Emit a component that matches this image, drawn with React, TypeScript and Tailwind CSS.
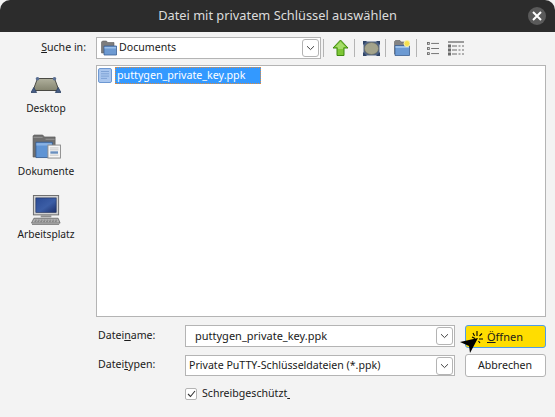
const font = { fontFamily: '"Noto Sans", sans-serif' };

function Chevron() {
  return (
    <span className="w-[17px] h-[18px] shrink-0 bg-white border border-[#b4b4b4] rounded-[3px] flex items-center justify-center">
      <svg width="9" height="6" viewBox="0 0 9 6" fill="none" stroke="#444" strokeWidth="1">
        <path d="M1 1.2 L4.5 4.6 L8 1.2" />
      </svg>
    </span>
  );
}

function Sep() {
  return <span className="block w-px h-[18px] bg-[#b4b4b4] shrink-0" />;
}

function FolderIcon() {
  return (
    <svg width="16" height="16" viewBox="0 0 16 16" className="shrink-0">
      <path d="M0.5 13 V2 L1.5 1 H5.5 L6.5 2.5 H13 V13 Z" fill="#7d7d7d" stroke="#5f5f5f" strokeWidth="0.6" />
      <path d="M3 6 H15.5 V15 H3 Z" fill="#6d9ad2" stroke="#3c5f92" strokeWidth="0.8" />
      <path d="M3.5 7 H15 V8.5 H3.5 Z" fill="#9cc0e8" />
    </svg>
  );
}

function UpIcon() {
  return (
    <svg width="17" height="18" viewBox="0 0 17 18">
      <path d="M8.5 1 L16 9 H12 V16.5 H5 V9 H1 Z" fill="#7ec636" stroke="#3f8a10" strokeWidth="1" strokeLinejoin="round" />
      <path d="M8.5 2.8 L13.5 8 H11 V10 H6 V8 H3.5 Z" fill="#a5dc6a" />
    </svg>
  );
}

function DesktopSmall() {
  return (
    <svg width="17" height="15" viewBox="0 0 17 15">
      <rect x="0.5" y="0.5" width="16" height="14" fill="#4f6384" />
      <ellipse cx="8.5" cy="7.5" rx="7" ry="6" fill="#a3a38b" stroke="#6e6e5c" strokeWidth="0.6" />
      <path d="M0 0 H4 L0 4 Z M17 0 H13 L17 4 Z M0 15 H4 L0 11 Z M17 15 H13 L17 11 Z" fill="#2f4466" />
    </svg>
  );
}

function NewFolder() {
  return (
    <svg width="16" height="16" viewBox="0 0 16 16">
      <path d="M0.5 14 V1.5 L1.5 0.5 H6 L7 2 H13 V14 Z" fill="#838383" stroke="#5f5f5f" strokeWidth="0.6" />
      <path d="M1 5.5 H15.5 V15.5 H1 Z" fill="#6c9ad3" stroke="#3c5f92" strokeWidth="0.8" />
      <path d="M1.5 6 H15 V8 H1.5 Z" fill="#9cc0e8" />
      <circle cx="13" cy="3.5" r="3" fill="#f4e04f" stroke="#f9f3b0" strokeWidth="1" />
    </svg>
  );
}

function ListIcon() {
  return (
    <svg width="12" height="15" viewBox="0 0 13 15" fill="none" stroke="#6b6b6b">
      <rect x="0.5" y="1" width="2" height="2" />
      <rect x="0.5" y="6.5" width="2" height="2" />
      <rect x="0.5" y="12" width="2" height="2" />
      <path d="M4.5 2 H13 M4.5 7.5 H13 M4.5 13 H13" strokeWidth="1" />
    </svg>
  );
}

function DetailIcon() {
  return (
    <svg width="16" height="15" viewBox="0 0 16 15" fill="none" stroke="#6b6b6b">
      <rect x="0" y="0" width="16" height="2" fill="#9a9a9a" stroke="none" />
      <rect x="0.5" y="4" width="2" height="2" />
      <rect x="0.5" y="8" width="2" height="2" />
      <rect x="0.5" y="12" width="2" height="2" />
      <path d="M4 5 H9 M10.5 5 H12.5 M14 5 H16 M4 9 H9 M10.5 9 H12.5 M14 9 H16 M4 13 H9 M10.5 13 H12.5 M14 13 H16" />
    </svg>
  );
}

function DocIcon() {
  return (
    <svg width="14" height="15" viewBox="0 0 14 15" className="shrink-0">
      <rect x="0.5" y="0.5" width="13" height="14" rx="1.5" fill="#a9c6ee" stroke="#6d98d2" />
      <path d="M3 3.5 H11 M3 5.8 H11 M3 8.1 H11 M3 10.4 H9" stroke="#7fa3d6" strokeWidth="1" />
    </svg>
  );
}

function DesktopBig() {
  return (
    <svg width="30" height="17" viewBox="0 0 30 17">
      <defs>
        <linearGradient id="dk" x1="0" y1="0" x2="0" y2="1">
          <stop offset="0" stopColor="#b0b09d" />
          <stop offset="1" stopColor="#84846f" />
        </linearGradient>
      </defs>
      <path d="M6.5 1.5 H23.5 L28 13.5 H2 Z" fill="url(#dk)" stroke="#4a4a44" strokeWidth="1" strokeLinejoin="round" />
      <circle cx="6.5" cy="1.8" r="1.8" fill="#5a6f93" />
      <circle cx="23.5" cy="1.8" r="1.8" fill="#5a6f93" />
      <path d="M0 15.5 L2.8 10.5 L5.6 15.5 Z M24.4 15.5 L27.2 10.5 L30 15.5 Z" fill="#475d84" stroke="#2f4466" strokeWidth="0.8" strokeLinejoin="round" />
    </svg>
  );
}

function DocsBig() {
  return (
    <svg width="29" height="25" viewBox="0 0 30 26">
      <path d="M1 24 V2 L2 1 H11 L13 3 H24 V24 Z" fill="#6f6f6f" stroke="#555" strokeWidth="0.6" />
      <path d="M1.5 3.5 H11 M14 5.5 H23.5" stroke="#969696" />
      <path d="M4 8.5 H21 V24.5 H4 Z" fill="#5f94d4" stroke="#31598f" strokeWidth="0.8" />
      <path d="M4.5 9.5 H20.5 V12 H4.5 Z" fill="#88b2e4" />
      <rect x="16.5" y="11.5" width="13" height="13.5" fill="#f7f7f7" stroke="#8c8c8c" />
      <path d="M18.5 14.5 H27.5 M18.5 16.5 H27.5 M18.5 22 H27.5" stroke="#c2c2c2" />
      <rect x="19" y="18" width="8" height="2.5" fill="#6a8fbe" />
    </svg>
  );
}

function ComputerBig() {
  return (
    <svg width="31" height="31" viewBox="0 0 32 32">
      <defs>
        <linearGradient id="sc" x1="0" y1="0" x2="1" y2="1">
          <stop offset="0" stopColor="#2a4a94" />
          <stop offset="0.55" stopColor="#3c5ea6" />
          <stop offset="1" stopColor="#1c2f6a" />
        </linearGradient>
      </defs>
      <rect x="2.5" y="0.5" width="26" height="20" fill="#d2d2d2" stroke="#6c6c6c" />
      <rect x="5" y="3" width="21" height="15" fill="url(#sc)" stroke="#1a2a55" strokeWidth="0.6" />
      <rect x="10" y="21" width="11" height="2" fill="#8e8e8e" />
      <path d="M3 24 H28 L30 29 H0.5 Z" fill="#b4b4b4" stroke="#5f5f5f" strokeWidth="0.8" />
      <path d="M4 26 H27 M3.5 27.5 H27.5" stroke="#7d7d7d" strokeDasharray="2 1" />
      <path d="M1 29.5 H29 V31 H1 Z" fill="#8a8a8a" />
    </svg>
  );
}

function SideItem({ icon, label, h, pb }: { icon: React.ReactNode; label: string; h: string; pb: string }) {
  return (
    <div className={"flex flex-col items-center justify-end " + h}>
      <div className={"flex items-end justify-center " + pb}>{icon}</div>
      <span className="text-[10.2px] leading-[15px] text-[#1a1a1a]">{label}</span>
    </div>
  );
}

function Combo({ children, h }: { children: React.ReactNode; h: string }) {
  return (
    <div className={"flex items-center justify-between bg-white border border-[#b4b4b4] pr-px text-[#1a1a1a] " + h}>
      {children}
      <Chevron />
    </div>
  );
}

export default function App() {
  return (
    <div className="relative w-[555px] h-[417px] bg-[#f3f3f3] flex flex-col overflow-hidden" style={font}>
      <div className="h-8 shrink-0 bg-[#2c2c2c] rounded-t-[10px] flex items-center relative text-[12.8px] text-[#dcdcdc] justify-center">
        Datei mit privatem Schlüssel auswählen
        <span className="absolute right-[9px] top-[7px] w-[18px] h-[18px] rounded-full bg-[#5a5a5a] flex items-center justify-center">
          <svg width="10" height="10" viewBox="0 0 10 10" stroke="#fff" strokeWidth="2">
            <path d="M1 1 L9 9 M9 1 L1 9" />
          </svg>
        </span>
      </div>

      <div className="flex-1 flex text-[10.6px]">
        <div className="w-[96px] shrink-0 flex flex-col">
          <div className="h-[22px] mt-[5px] flex items-center justify-end pr-[10px] text-[#1a1a1a]">
            <span><span className="underline">S</span>uche in:</span>
          </div>
          <div className="flex flex-col mt-[6px] pr-[4px]">
            <SideItem h="h-[51px]" pb="pb-[7px]" icon={<DesktopBig />} label="Desktop" />
            <SideItem h="h-[63px]" pb="pb-[5px]" icon={<DocsBig />} label="Dokumente" />
            <SideItem h="h-[63px]" pb="pb-[1px]" icon={<ComputerBig />} label="Arbeitsplatz" />
          </div>
        </div>

        <div className="flex-1 flex flex-col pr-[9px]">
          <div className="h-[22px] mt-[5px] flex items-center">
            <div className="w-[225px] shrink-0">
              <Combo h="h-[22px]">
                <span className="flex items-center gap-[2px] pl-[4px]"><FolderIcon />Documents</span>
              </Combo>
            </div>
            <span className="ml-[2px]"><Sep /></span>
            <span className="ml-[8px] w-[17px] flex"><UpIcon /></span>
            <span className="ml-[5px]"><Sep /></span>
            <span className="ml-[8px] w-[17px] flex"><DesktopSmall /></span>
            <span className="ml-[5px]"><Sep /></span>
            <span className="ml-[8px] w-[16px] flex"><NewFolder /></span>
            <span className="ml-[6px]"><Sep /></span>
            <span className="ml-[10px] flex"><ListIcon /></span>
            <span className="ml-[9px] flex"><DetailIcon /></span>
          </div>

          <div className="mt-[6px] h-[252px] bg-white border border-[#b4b4b4] pl-[1px] pt-[1px]">
            <div className="flex items-center gap-[3px]">
              <DocIcon />
              <span className="w-[146px] h-[17px] bg-[#3399ff] outline-1 outline-dotted outline-[#e08a3c] -outline-offset-1 pl-[2px] text-[10.7px] leading-[17px] text-white">
                puttygen_private_key.ppk
              </span>
            </div>
          </div>

          <div className="mt-[8px] grid grid-cols-[79px_270px_81px] gap-x-[10px] text-[#1a1a1a] items-start">
            <div className="h-[22px] flex items-center pl-[2px]">
              <span>Datei<span className="underline">n</span>ame:</span>
            </div>
            <Combo h="h-[22px]"><span className="pl-[9px] text-[11px]">puttygen_private_key.ppk</span></Combo>
            <div className="h-[23px] rounded-[3px] bg-[#ffdd00] border border-[#4f9ce8] flex items-center pl-[21px] pt-[1px]">
              <span className="text-[11px]"><span className="underline">Ö</span>ffnen</span>
            </div>
            <div className="mt-[6px] h-[20px] flex items-center pl-[2px] pt-[1px]">
              <span>Datei<span className="underline">t</span>ypen:</span>
            </div>
            <div className="mt-[7px]">
              <Combo h="h-[21px]"><span className="pl-[3px] pt-[1px]">Private PuTTY-Schlüsseldateien (*.ppk)</span></Combo>
            </div>
            <div className="mt-[6px] h-[23px] rounded-[3px] bg-white border border-[#b4b4b4] flex items-center justify-center pt-[1px] pr-[1px]">
              Abbrechen
            </div>
            <div />
            <label className="mt-[9px] col-span-2 flex items-center gap-[5px] h-[16px]">
              <span className="w-[12px] h-[12px] bg-white border border-[#b4b4b4] rounded-[2px] flex items-center justify-center">
                <svg width="9" height="8" viewBox="0 0 9 8" fill="none" stroke="#333" strokeWidth="1.1">
                  <path d="M1 4 L3.5 6.5 L8 1" />
                </svg>
              </span>
              <span>Schreibgeschützt<span className="underline">&nbsp;</span></span>
            </label>
          </div>
        </div>
      </div>

      <svg className="absolute left-[459px] top-[330px]" width="25" height="24" viewBox="0 0 25 24">
        <path d="M1 12 L19 8 L11 23 L10 16 Z" fill="#000" />
        <path d="M18 1 V6 M23 3.5 L20.5 6 M24 9 H20 M14 3 L15.5 6 M13 7 L16 8.5 M21 13 L19.5 11" stroke="#000" strokeWidth="1.1" />
      </svg>
    </div>
  );
}
